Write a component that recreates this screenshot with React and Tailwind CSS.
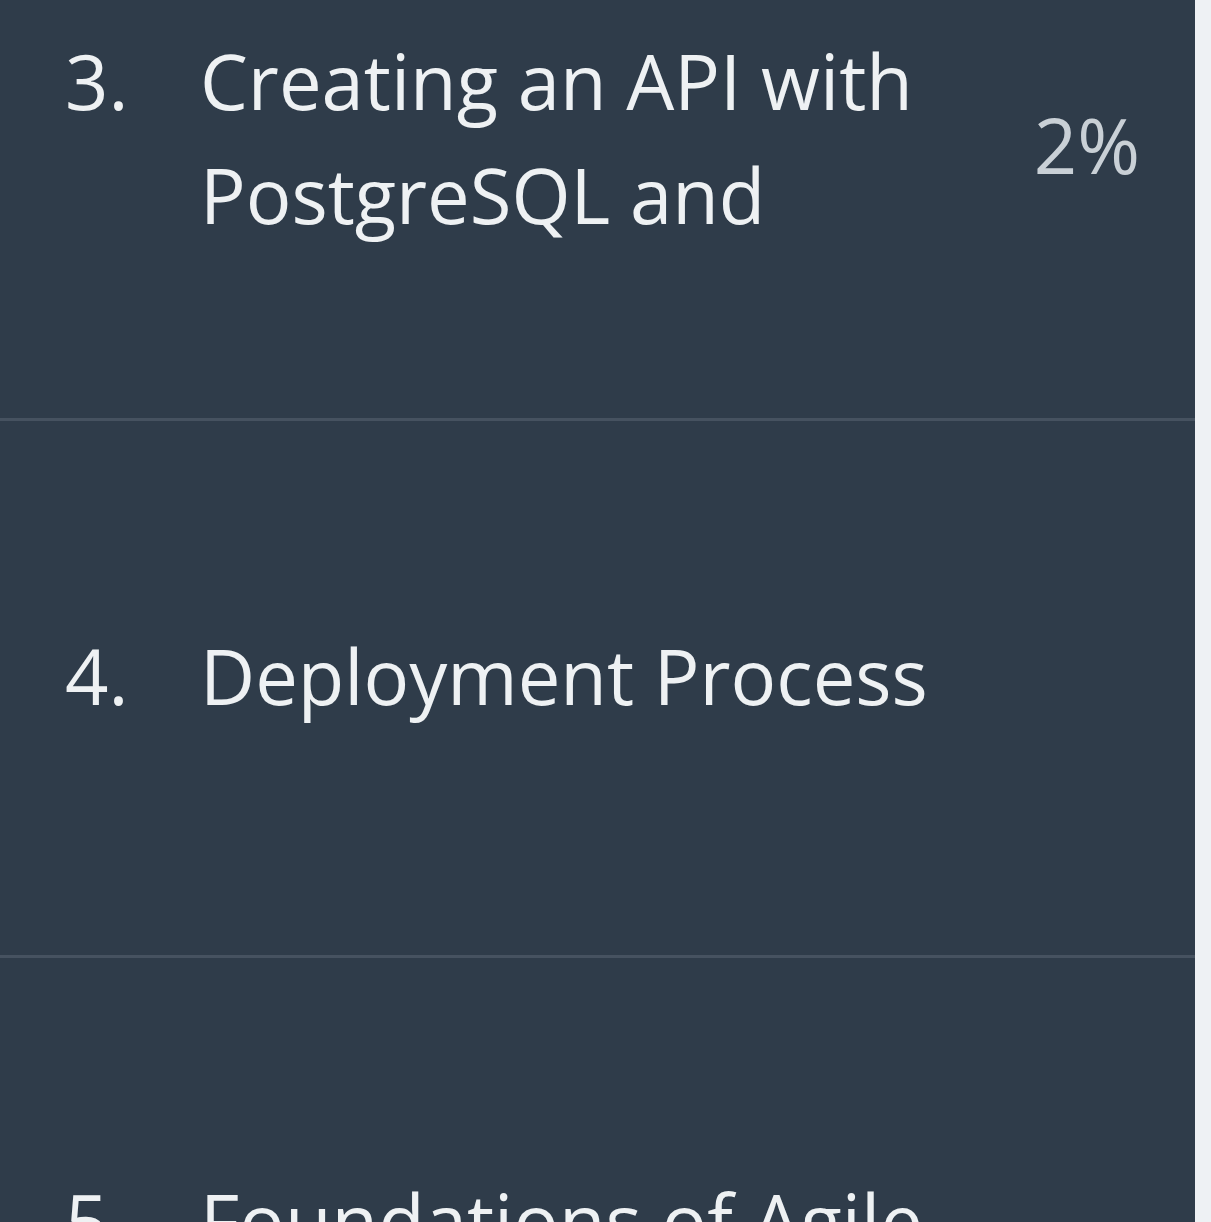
import React from "react";

export default function App() {
  return (
    <div className="w-[1211px] h-[1222px] overflow-hidden flex bg-[#eef1f4]" style={{ fontFamily: '"Open Sans", "Noto Sans", sans-serif' }}>
      <div className="w-[1195px] h-full bg-[#2f3c4a] flex flex-col shrink-0 text-[76px] leading-[1.5] text-[#eef1f3]">
        {/* Row 3 */}
        <div className="h-[418px] shrink-0 pt-[24px] pl-[65px] pr-[55px]">
          <div className="flex items-center">
            <div className="w-[135px] shrink-0 self-start">3.</div>
            <div className="w-[760px] shrink-0">
              Creating an API with
              <br />
              PostgreSQL and
            </div>
            <div className="ml-auto pt-[14px] text-[#c9d0d6]">2%</div>
          </div>
        </div>
        <div className="h-[3px] shrink-0 bg-[#465260]" />
        {/* Row 4 */}
        <div className="h-[534px] shrink-0 pt-[198px] pl-[65px] flex items-start">
          <div className="w-[135px] shrink-0">4.</div>
          <div>Deployment Process</div>
        </div>
        <div className="h-[3px] shrink-0 bg-[#465260]" />
        {/* Row 5 */}
        <div className="shrink-0 pt-[206px] pl-[65px] flex items-start">
          <div className="w-[135px] shrink-0">5.</div>
          <div className="whitespace-nowrap">Foundations of Agile</div>
        </div>
      </div>
      <div className="flex-1 h-full bg-[#eef1f4]" />
    </div>
  );
}
